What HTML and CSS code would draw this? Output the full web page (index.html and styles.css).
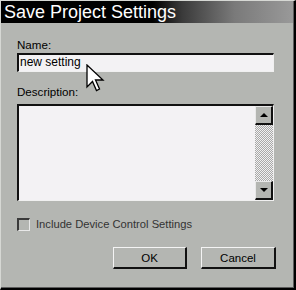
FILE: index.html
```html
<!DOCTYPE html>
<html>
<head>
<meta charset="utf-8">
<link rel="stylesheet" href="styles.css">
</head>
<body>
<div class="window">
  <div class="titlebar">Save Project Settings</div>
  <div class="content">
    <div class="label">Name:</div>
    <div class="field">new setting</div>
    <div class="label desc">Description:</div>
    <div class="textarea">
      <div class="text-area-body"></div>
      <div class="scrollbar">
        <div class="sbtn"><svg width="8" height="4" viewBox="0 0 8 4"><path d="M4 0 L8 4 L0 4 Z" fill="#000"/></svg></div>
        <div class="track"></div>
        <div class="sbtn"><svg width="8" height="4" viewBox="0 0 8 4"><path d="M0 0 L8 0 L4 4 Z" fill="#000"/></svg></div>
      </div>
    </div>
    <div class="check-row">
      <span class="checkbox"></span>
      <span class="check-label">Include Device Control Settings</span>
    </div>
    <div class="buttons">
      <div class="btn ok">OK</div>
      <div class="btn cancel">Cancel</div>
    </div>
  </div>
  <svg class="cursor" width="19" height="28" viewBox="0 0 19 28">
    <path d="M1 1 L1 23 L6.5 17.5 L10.5 26.5 L13.5 25 L9.5 16 L17 16 Z" fill="#fff" stroke="#000" stroke-width="1.3" stroke-linejoin="miter"/>
  </svg>
</div>
</body>
</html>
```
FILE: styles.css
```css
* { box-sizing: border-box; }
html, body { margin: 0; padding: 0; background: #b4b6b2; }
body {
  font-family: "Liberation Sans", Arial, sans-serif;
  font-size: 11px;
  color: #000;
}
.window {
  position: relative;
  width: 296px;
  height: 290px;
  background: #b4b6b2;
  border-top: 1px solid #d6d8d4;
  border-left: 1px solid #d6d8d4;
  border-right: 2px solid #000;
  border-bottom: 2px solid #000;
  box-shadow: inset -1px -1px 0 #5c5c5c;
  display: flex;
  flex-direction: column;
}
.titlebar {
  height: 22px;
  margin-right: 1px;
  background: linear-gradient(to right, #000 0%, #000 52%, #3a3a3a 62%, #7a7a7a 80%, #999 100%);
  color: #fff;
  font-size: 18px;
  line-height: 22px;
  padding-left: 3px;
  white-space: nowrap;
}
.content {
  display: flex;
  flex-direction: column;
  padding: 15px 18px 0 16px;
}
.label {
  line-height: 13px;
  height: 13px;
  font-size: 11.6px;
}
.field {
  margin-top: 2px;
  height: 19px;
  width: 257px;
  background: #f3f2f4;
  border-top: 2px solid #111;
  border-left: 2px solid #111;
  border-right: 1px solid #f0f0f0;
  border-bottom: 1px solid #f0f0f0;
  line-height: 15px;
  padding-left: 1px;
  font-size: 12px;
}
.desc { margin-top: 13px; }
.textarea {
  margin-top: 6px;
  height: 97px;
  width: 257px;
  display: flex;
  background: #f3f2f4;
  border-top: 2px solid #111;
  border-left: 2px solid #111;
  border-right: 1px solid #f0f0f0;
  border-bottom: 1px solid #f0f0f0;
}
.text-area-body { flex: 1; }
.scrollbar {
  width: 18px;
  display: flex;
  flex-direction: column;
}
.sbtn {
  height: 19px;
  background: #b4b6b2;
  border-top: 1px solid #e8e8e8;
  border-left: 1px solid #e8e8e8;
  border-right: 2px solid #111;
  border-bottom: 2px solid #111;
  display: flex;
  align-items: center;
  justify-content: center;
}
.track {
  flex: 1;
  background-color: #f0f0f0;
  background-image: repeating-conic-gradient(#a8a8a8 0 25%, #f0f0f0 0 50%);
  background-size: 2px 2px;
}
.check-row {
  margin-top: 17px;
  display: flex;
  align-items: center;
  height: 13px;
}
.checkbox {
  width: 13px;
  height: 13px;
  border-top: 2px solid #3a3a3a;
  border-left: 2px solid #3a3a3a;
  border-right: 1px solid #e8e8e8;
  border-bottom: 1px solid #e8e8e8;
  background: #b4b6b2;
}
.check-label {
  margin-left: 6px;
  color: #333;
  font-size: 11.2px;
  line-height: 13px;
}
.buttons {
  margin-top: 16px;
  display: flex;
  justify-content: flex-end;
  gap: 14px;
  padding-right: 0;
}
.btn {
  height: 22px;
  background: #b4b6b2;
  border-top: 1px solid #f4f4f4;
  border-left: 1px solid #f4f4f4;
  border-right: 2px solid #111;
  border-bottom: 2px solid #111;
  display: flex;
  align-items: center;
  justify-content: center;
  font-size: 11.5px;
}
.ok { width: 74px; }
.cancel { width: 75px; }
.cursor {
  position: absolute;
  left: 85px;
  top: 63px;
}
```
